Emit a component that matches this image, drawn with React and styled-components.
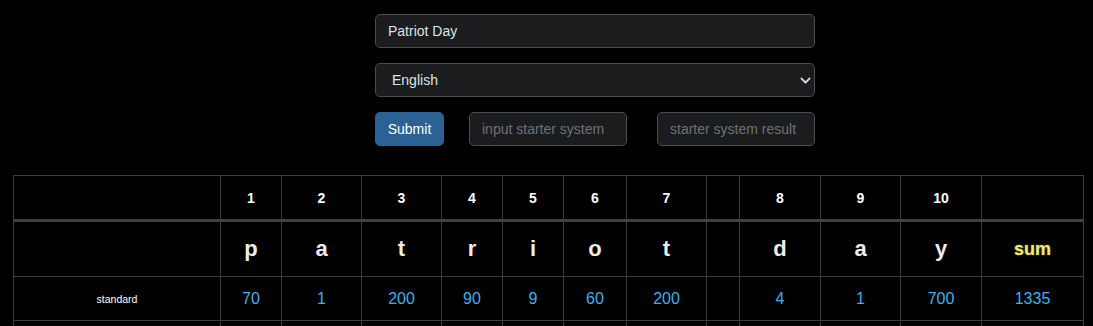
import styled, { createGlobalStyle } from "styled-components"

const GlobalStyle = createGlobalStyle`
  html, body {
    margin: 0;
    background: #000;
    color: #dee2e6;
    font-family: "Liberation Sans", Arial, sans-serif;
  }
`

const chevron =
  "url(\"data:image/svg+xml,%3csvg xmlns='http://www.w3.org/2000/svg' viewBox='0 0 16 16'%3e%3cpath fill='none' stroke='%23dee2e6' stroke-linecap='round' stroke-linejoin='round' stroke-width='2.6' d='m2 5 6 6 6-6'/%3e%3c/svg%3e\")"

const Page = styled.div`
  padding: 14px 0 0 13px;
`

const Form = styled.form`
  width: 440px;
  margin-left: 362px;
  display: flex;
  flex-direction: column;
  gap: 15px;
`

const TextInput = styled.input`
  box-sizing: border-box;
  width: ${p => p.$width || "100%"};
  height: 34px;
  padding: 0 12px;
  margin-left: ${p => p.$offset || "0"};
  background: #1b1c1e;
  border: 1px solid #4a4d52;
  border-radius: 5px;
  color: #dee2e6;
  font-family: inherit;
  font-size: 14px;
  outline: none;
  &::placeholder {
    color: #6d7277;
  }
`

const Select = styled.select`
  box-sizing: border-box;
  width: 100%;
  height: 34px;
  padding: 0 36px 0 16px;
  appearance: none;
  background: #1b1c1e ${chevron} no-repeat right 3px center / 11px 11px;
  border: 1px solid #4a4d52;
  border-radius: 5px;
  color: #dee2e6;
  font-family: inherit;
  font-size: 14px;
  outline: none;
`

const ButtonRow = styled.div`
  display: flex;
  align-items: center;
`

const SubmitButton = styled.button`
  box-sizing: border-box;
  width: 69px;
  height: 34px;
  background: #2b6194;
  border: 1px solid #2b6194;
  border-radius: 5px;
  color: #fff;
  font-family: inherit;
  font-size: 14px;
  padding: 0;
`

const Table = styled.table`
  margin-top: 29px;
  border-collapse: collapse;
  table-layout: fixed;
  width: 1070px;
`

const Cell = styled.td`
  border: 1px solid #3b3d40;
  text-align: center;
  padding: 0;
`

const HeadCell = styled(Cell)`
  height: 43px;
  color: #fff;
  font-weight: bold;
  font-size: 14px;
  border-bottom: 3px solid #3d4044;
`

const LetterCell = styled(Cell)`
  height: 54px;
  color: #ececec;
  font-weight: bold;
  font-size: 22px;
`

const SumCell = styled(Cell)`
  color: #f3e96d;
  font-weight: bold;
  font-size: 18px;
  text-shadow: 0 0 2px rgba(243, 233, 109, 0.5);
`

const ValueCell = styled(Cell)`
  height: 43px;
  color: #35b3f2;
  font-size: 16px;
`

const LabelCell = styled(Cell)`
  color: #fff;
  font-size: 10.5px;
`

const widths = [207, 61, 80, 80, 61, 61, 63, 80, 33, 81, 80, 81, 102]
const letters = ["p", "a", "t", "r", "i", "o", "t", "", "d", "a", "y"]
const positions = ["1", "2", "3", "4", "5", "6", "7", "", "8", "9", "10"]
const rows = [
  { name: "standard", values: ["70", "1", "200", "90", "9", "60", "200", "", "4", "1", "700"], sum: "1335" },
  { name: "reduced", values: ["7", "1", "2", "9", "9", "6", "2", "", "4", "1", "7"], sum: "48" },
]

const App = () => {
  return (
    <Page>
      <GlobalStyle />
      <Form onSubmit={e => e.preventDefault()}>
        <TextInput defaultValue="Patriot Day" />
        <Select defaultValue="English">
          <option>English</option>
          <option>Hebrew</option>
          <option>Greek</option>
        </Select>
        <ButtonRow>
          <SubmitButton type="submit">Submit</SubmitButton>
          <TextInput $width="158px" $offset="25px" placeholder="input starter system" />
          <TextInput $width="158px" $offset="auto" placeholder="starter system result" />
        </ButtonRow>
      </Form>
      <Table>
        <colgroup>
          {widths.map((w, i) => <col key={i} style={{ width: w }} />)}
        </colgroup>
        <tbody>
          <tr>
            <HeadCell />
            {positions.map((p, i) => <HeadCell key={i}>{p}</HeadCell>)}
            <HeadCell />
          </tr>
          <tr>
            <LetterCell />
            {letters.map((l, i) => <LetterCell key={i}>{l}</LetterCell>)}
            <SumCell>sum</SumCell>
          </tr>
          {rows.map(r => (
            <tr key={r.name}>
              <LabelCell>{r.name}</LabelCell>
              {r.values.map((v, i) => <ValueCell key={i}>{v}</ValueCell>)}
              <ValueCell>{r.sum}</ValueCell>
            </tr>
          ))}
        </tbody>
      </Table>
    </Page>
  )
}

export default App
